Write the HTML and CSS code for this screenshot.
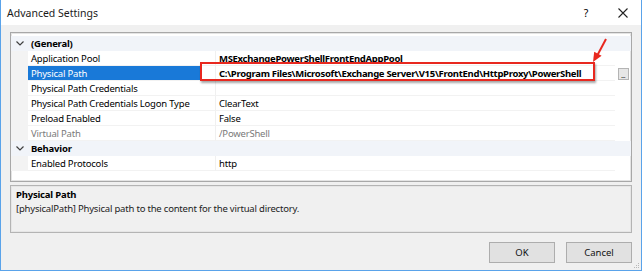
FILE: index.html
```html
<!DOCTYPE html>
<html>
<head>
<meta charset="utf-8">
<link rel="stylesheet" href="styles.css">
</head>
<body>
<div class="window">
  <div class="titlebar">
    <span class="title">Advanced Settings</span>
    <span class="tb-btn help">?</span>
    <span class="tb-btn close">
      <svg width="10" height="10" viewBox="0 0 10 10"><path d="M0.5 0.5 L9.5 9.5 M9.5 0.5 L0.5 9.5" stroke="#222" stroke-width="1.1" fill="none"/></svg>
    </span>
  </div>
  <div class="content">
    <div class="grid">
      <div class="cat">
        <span class="gutter"><svg width="8" height="5" viewBox="0 0 8 5"><path d="M0.5 0.5 L4 4 L7.5 0.5" stroke="#404040" stroke-width="1.2" fill="none"/></svg></span>
        <span class="cat-name">(General)</span>
      </div>
      <div class="row">
        <span class="gutter"></span><span class="name">Application Pool</span><span class="value bold">MSExchangePowerShellFrontEndAppPool</span><span class="tail"></span>
      </div>
      <div class="row selected">
        <span class="gutter"></span><span class="name">Physical Path</span><span class="value bold">C:\Program Files\Microsoft\Exchange Server\V15\FrontEnd\HttpProxy\PowerShell</span><span class="tail"><span class="ellipsis">...</span></span>
      </div>
      <div class="row">
        <span class="gutter"></span><span class="name">Physical Path Credentials</span><span class="value"></span><span class="tail"></span>
      </div>
      <div class="row">
        <span class="gutter"></span><span class="name">Physical Path Credentials Logon Type</span><span class="value">ClearText</span><span class="tail"></span>
      </div>
      <div class="row">
        <span class="gutter"></span><span class="name">Preload Enabled</span><span class="value">False</span><span class="tail"></span>
      </div>
      <div class="row disabled">
        <span class="gutter"></span><span class="name">Virtual Path</span><span class="value">/PowerShell</span><span class="tail"></span>
      </div>
      <div class="cat">
        <span class="gutter"><svg width="8" height="5" viewBox="0 0 8 5"><path d="M0.5 0.5 L4 4 L7.5 0.5" stroke="#404040" stroke-width="1.2" fill="none"/></svg></span>
        <span class="cat-name">Behavior</span>
      </div>
      <div class="row">
        <span class="gutter"></span><span class="name">Enabled Protocols</span><span class="value">http</span><span class="tail"></span>
      </div>
      <div class="highlight-box"></div>
      <svg class="arrow" width="30" height="30" viewBox="0 0 30 30">
        <path d="M21 1 L12.5 17" stroke="#e8281f" stroke-width="2" fill="none"/>
        <path d="M8 24 L9.2 13.8 L16.6 17.8 Z" fill="#e8281f"/>
      </svg>
    </div>
    <div class="desc">
      <div class="desc-title">Physical Path</div>
      <div class="desc-text">[physicalPath] Physical path to the content for the virtual directory.</div>
    </div>
    <div class="buttons">
      <button class="btn">OK</button>
      <button class="btn">Cancel</button>
    </div>
  </div>
  <svg class="grip" width="7" height="7" viewBox="0 0 7 7">
    <rect x="5" y="1" width="1" height="1" fill="#b8b8b8"/>
    <rect x="3" y="3" width="1" height="1" fill="#b8b8b8"/>
    <rect x="5" y="3" width="1" height="1" fill="#b8b8b8"/>
    <rect x="1" y="5" width="1" height="1" fill="#b8b8b8"/>
    <rect x="3" y="5" width="1" height="1" fill="#b8b8b8"/>
    <rect x="5" y="5" width="1" height="1" fill="#b8b8b8"/>
  </svg>
</div>
</body>
</html>
```
FILE: styles.css
```css
html, body {
  margin: 0;
  padding: 0;
  background: #ffffff;
}
body {
  font-family: "Noto Sans", "Open Sans", sans-serif;
  font-size: 9.5px;
  letter-spacing: -0.2px;
  color: #000;
}
.window {
  position: relative;
  width: 640px;
  height: 270px;
  border-left: 1px solid #5aa3ea;
  border-right: 1px solid #5aa3ea;
  border-bottom: 1px solid #5aa3ea;
  background: #f0f0f0;
  display: flex;
  flex-direction: column;
}
.titlebar {
  height: 25px;
  background: #ffffff;
  display: flex;
  align-items: center;
  padding-left: 6px;
}
.title {
  font-size: 10.5px;
  letter-spacing: 0;
  color: #1a1a1a;
  flex: 1;
}
.tb-btn {
  display: flex;
  align-items: center;
  justify-content: center;
}
.help {
  width: 10px;
  font-size: 10.5px;
  margin-right: 27px;
}
.close {
  width: 10px;
  margin-right: 13px;
}
.content {
  padding: 7px 9px 0 9px;
  display: flex;
  flex-direction: column;
}
.grid {
  position: relative;
  height: 145px;
  padding-top: 3px;
  border: 1px solid #a8a8a8;
  box-shadow: inset 0 0 0 1px #e4e4e4;
  background: #ffffff;
  display: flex;
  flex-direction: column;
}
.cat, .row {
  display: grid;
  grid-template-columns: 17px 188px 1fr 16px;
  height: 15px;
  line-height: 15px;
  white-space: nowrap;
}
.cat {
  grid-template-columns: 17px 1fr;
  background: #f1f4f9;
  font-weight: bold;
}
.gutter {
  background: #f3f3f3;
  display: flex;
  align-items: center;
  justify-content: center;
}
.cat .gutter {
  background: transparent;
}
.cat-name {
  padding-left: 3px;
}
.name {
  padding-left: 3px;
  border-right: 1px solid #f0f0f0;
  border-bottom: 1px solid #f2f2f2;
  box-sizing: border-box;
  overflow: hidden;
}
.value {
  padding-left: 3px;
  border-bottom: 1px solid #f2f2f2;
  box-sizing: border-box;
  overflow: hidden;
}
.bold {
  font-weight: bold;
  letter-spacing: -0.3px;
}
.selected .name {
  background: linear-gradient(to right, #1979d8 173px, #ffffff 173px);
  color: #ffffff;
}
.disabled {
  color: #7a7a7a;
}
.tail {
  display: flex;
  align-items: center;
  justify-content: center;
}
.ellipsis {
  width: 9px;
  height: 10px;
  background: #e6e6e6;
  border: 1px solid #b4b4b4;
  display: flex;
  align-items: flex-end;
  justify-content: center;
  font-size: 7px;
  letter-spacing: -0.5px;
  line-height: 7px;
  color: #333;
  overflow: hidden;
}
.highlight-box {
  position: absolute;
  left: 189px;
  top: 29px;
  width: 391px;
  height: 15px;
  border: 2px solid #e8281f;
  box-shadow: 1px 2px 2px rgba(0, 0, 0, 0.35);
}
.arrow {
  position: absolute;
  left: 574px;
  top: 5px;
}
.desc {
  margin-top: 3px;
  height: 44px;
  border: 1px solid #b4b4b4;
  box-shadow: inset 0 0 0 1px #e6e6e6;
  padding: 2px 5px 0 5px;
  line-height: 14px;
}
.desc-title {
  font-weight: bold;
}
.desc-text {
  color: #222;
}
.buttons {
  margin-top: 9px;
  display: flex;
  justify-content: flex-end;
  gap: 11px;
}
.btn {
  width: 66px;
  height: 21px;
  background: #e1e1e1;
  border: 1px solid #adadad;
  font-family: "Noto Sans", "Open Sans", sans-serif;
  font-size: 9.5px;
  color: #111;
  padding: 0;
}
.grip {
  position: absolute;
  right: 1px;
  bottom: 1px;
}
```
